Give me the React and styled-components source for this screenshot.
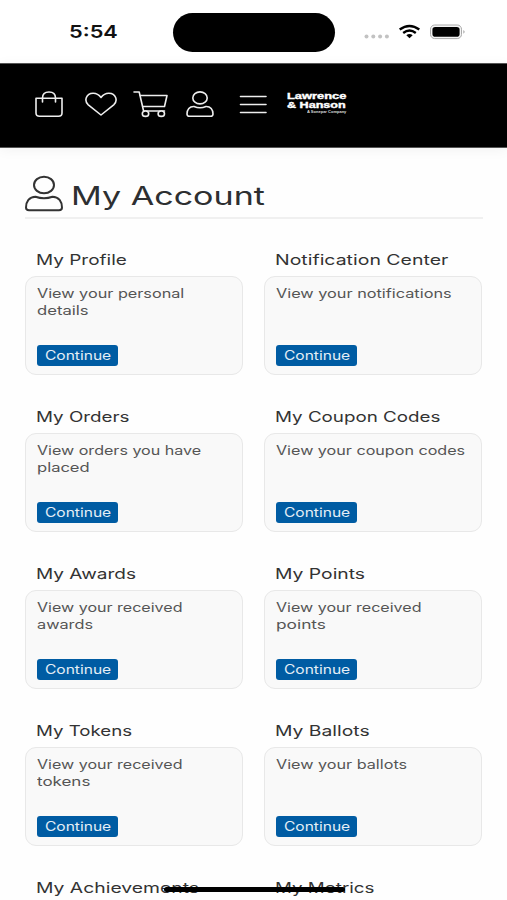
import React, { useLayoutEffect, useRef, useState } from "react";
import styled, { createGlobalStyle } from 'styled-components';


const GlobalStyle = createGlobalStyle`
    * {
        box-sizing: border-box;
    }
    body {
        margin: 0;
        background-color: white;
        font-family: Inter, "Liberation Sans", sans-serif;
        overflow: hidden;
    }
    h1, h2, p {
        margin: 0;
        font-weight: normal;
    }
`
const Screen = styled.div`
    position: relative;
    width: 507px;
    height: 900px;
    overflow: hidden;
    background-color: #fefefe;
`
const StatusBar = styled.div`
    height: 63px;
    display: flex;
    align-items: center;
    background-color: white;
`
const Clock = styled.div`
    width: 173px;
    padding-left: 68.5px;
    font-size: 17.5px;
    font-weight: 600;
    line-height: 24px;
    color: #111;
`
const Island = styled.div`
    width: 162px;
    height: 39px;
    margin-top: 1px;
    border-radius: 20px;
    background-color: black;
`
const StatusIcons = styled.svg`
    width: 104px;
    height: 20px;
    margin-left: 28px;
`
const NavBar = styled.nav`
    height: 85px;
    padding-left: 35px;
    display: flex;
    align-items: flex-start;
    background-color: black;
    border-top: 1px solid #555;
    border-bottom: 1px solid #555;
    box-shadow: 0 2px 12px rgba(0, 0, 0, 0.05);
`
const NavIcon = styled.svg`
    flex: none;
    width: ${props => props.$width}px;
    height: 28px;
    margin: 26px ${props => props.$gap}px 0 0;
    fill: none;
    stroke: #eee;
    stroke-width: 1.6;
    stroke-linecap: round;
    stroke-linejoin: round;
`
const Logo = styled.div`
    width: 60px;
    padding-top: 28px;
    font-family: "Liberation Sans", Arial, sans-serif;
    font-weight: bold;
    color: white;
`
const LogoLine = styled.div`
    height: 8.5px;
    font-size: 9.6px;
    line-height: 8.5px;
    -webkit-text-stroke: 0.4px white;
`
const LogoTag = styled.div`
    padding: 1px 0 0 20px;
    font-size: 3.5px;
    line-height: 4px;
    color: #ddd;
`
const Main = styled.main`
    padding: 26px 24.5px 0 25px;
`
const TitleRow = styled.header`
    height: 45px;
    display: flex;
    border-bottom: 2px solid #f0f0f0;
`
const TitleIcon = styled.svg`
    flex: none;
    width: 38px;
    height: 38px;
    margin-top: 1px;
    fill: none;
    stroke: #333;
    stroke-width: 2;
`
const Title = styled.h1`
    padding: 6px 0 0 8px;
    font-size: 25px;
    line-height: 32px;
    color: #2d2f31;
`
const Grid = styled.div`
    padding-top: 30px;
    display: grid;
    grid-template-columns: 218px 218px;
    column-gap: 21px;
    grid-auto-rows: 157.1px;
`
const CardTitle = styled.h2`
    height: 27px;
    padding-left: 10.5px;
    font-size: 14.6px;
    line-height: 22px;
    color: #333;
`
const CardBody = styled.div`
    height: 99px;
    padding: 9px 11px 8.5px 11px;
    display: flex;
    flex-direction: column;
    align-items: flex-start;
    justify-content: space-between;
    border: 1px solid #e8e8e8;
    border-radius: 11px;
    background-color: #f9f9f9;
`
const CardText = styled.p`
    font-size: 12.8px;
    line-height: 16.7px;
    color: #555;
`
const Button = styled.button`
    width: 81px;
    height: 21px;
    padding: 0 0 0 7.5px;
    text-align: left;
    border: none;
    border-radius: 3px;
    background-color: #005ca3;
    color: #e4eef6;
    font-family: inherit;
    font-size: 12.4px;
    line-height: 21px;
`
const HomeBar = styled.div`
    position: absolute;
    left: 164px;
    bottom: 8.5px;
    width: 181px;
    height: 5px;
    border-radius: 3px;
    background-color: black;
`
const Wide = styled.span`
    display: block;
    width: max-content;
    white-space: nowrap;
    transform-origin: left center;
`

// one line of wide type, drawn out to the given width
function Stretch(props) {
    const ref = useRef(null);
    const [scale, setScale] = useState(1);

    useLayoutEffect(() => {
        setScale(props.width / ref.current.offsetWidth);
    }, [props.width]);

    return <Wide ref={ref} style={{ transform: `scaleX(${scale})` }}>{props.children}</Wide>
}

const cards = [
    { title: ["My Profile", 91], text: [["View your personal", 147], ["details", 52]] },
    { title: ["Notification Center", 173.5], text: [["View your notifications", 175.5]] },
    { title: ["My Orders", 94], text: [["View orders you have", 164.5], ["placed", 53]] },
    { title: ["My Coupon Codes", 166], text: [["View your coupon codes", 189]] },
    { title: ["My Awards", 100.5], text: [["View your received", 145.5], ["awards", 56]] },
    { title: ["My Points", 90], text: [["View your received", 145.5], ["points", 50]] },
    { title: ["My Tokens", 96], text: [["View your received", 145.5], ["tokens", 53]] },
    { title: ["My Ballots", 94], text: [["View your ballots", 131.5]] },
    { title: ["My Achievements", 163] },
    { title: ["My Metrics", 99] },
]

function Card(props) {
    return (
        <section>
            <CardTitle><Stretch width={props.title[1]}>{props.title[0]}</Stretch></CardTitle>
            {props.text && (
                <CardBody>
                    <CardText>
                        {props.text.map(line => (
                            <Stretch key={line[0]} width={line[1]}>{line[0]}</Stretch>
                        ))}
                    </CardText>
                    <Button><Stretch width={66.5}>Continue</Stretch></Button>
                </CardBody>
            )}
        </section>
    )
}

function Status() {
    return (
        <StatusBar>
            <Clock><Stretch width={48.5}>5:54</Stretch></Clock>
            <Island />
            <StatusIcons viewBox="0 0 104 20">
                <g fill="#c2c2c2">
                    <circle cx="3.5" cy="14.5" r="2" />
                    <circle cx="10.3" cy="14.5" r="2" />
                    <circle cx="17.1" cy="14.5" r="2" />
                    <circle cx="23.9" cy="14.5" r="2" />
                </g>
                <g fill="none" stroke="black" strokeWidth="2.4">
                    <path d="M36.7 7.5Q46.5 0.4 56.3 7.5" />
                    <path d="M40.2 11Q46.5 6.2 52.8 11" />
                </g>
                <path d="M43.3 13.2Q46.5 11 49.7 13.2L46.5 16.2Z" />
                <rect x="67.5" y="3" width="31" height="13.6" rx="4.2" fill="#f4f4f4" stroke="#aaa" />
                <rect x="69.4" y="4.9" width="27.2" height="9.8" rx="2.8" />
                <path d="M100.5 8Q102.5 9.8 100.5 11.8Z" fill="#888" />
            </StatusIcons>
        </StatusBar>
    )
}

function Nav() {
    return (
        <NavBar>
            <NavIcon $width={28} $gap={22} viewBox="0 0 28 28">
                <path d="M1 8.2H27V23Q27 26.3 23.5 26.3H4.5Q1 26.3 1 23Z" />
                <path d="M7.5 12V8Q7.5 2 14 2Q20.5 2 20.5 8V12" />
            </NavIcon>
            <NavIcon $width={32} $gap={16} viewBox="0 0 32 28">
                <path d="M16 25L3.3 14.8C-1.3 10.6 1.2 3.5 8 3.3C11.8 3.2 14.3 5.2 16 7.5C17.7 5.2 20.2 3.2 24 3.3C30.8 3.5 33.3 10.6 28.7 14.8Z" />
            </NavIcon>
            <NavIcon $width={35} $gap={18} viewBox="0 0 35 28">
                <path d="M1 2H6.2L10.6 21H31.5" />
                <path d="M7.3 5.5H34L31.5 16.5H9.7" />
                <ellipse cx="12.5" cy="23.7" rx="3.2" ry="2.7" fill="black" />
                <ellipse cx="28.3" cy="23.7" rx="3.2" ry="2.7" fill="black" />
            </NavIcon>
            <NavIcon $width={28} $gap={25} viewBox="0 0 28 28">
                <ellipse cx="14" cy="7.9" rx="7.2" ry="6" />
                <path d="M8 16.5C11.5 18 16.5 18 20 16.5C24.5 16.3 27 19.5 27 24Q27 26.3 24.5 26.3H3.5Q1 26.3 1 24C1 19.5 3.5 16.3 8 16.5Z" />
            </NavIcon>
            <NavIcon $width={28} $gap={20} viewBox="0 0 28 28">
                <path d="M1.5 6.5H27M1.5 14.5H27M1.5 22.5H27" />
            </NavIcon>
            <Logo>
                <LogoLine><Stretch width={59}>Lawrence</Stretch></LogoLine>
                <LogoLine><Stretch width={59}>&amp; Hanson</Stretch></LogoLine>
                <LogoTag><Stretch width={39}>A Sonepar Company</Stretch></LogoTag>
            </Logo>
        </NavBar>
    )
}

function App() {
    return (
        <Screen>
            <GlobalStyle />
            <Status />
            <Nav />
            <Main>
                <TitleRow>
                    <TitleIcon viewBox="0 0 38 38">
                        <ellipse cx="19" cy="10" rx="10" ry="8.3" />
                        <path d="M10.5 21.7C15.5 23.5 22.5 23.5 27.5 21.7C33.8 21.7 37 26.5 37 32.5Q37 35.3 34 35.3H4Q1 35.3 1 32.5C1 26.5 4.2 21.7 10.5 21.7Z" />
                    </TitleIcon>
                    <Title><Stretch width={193.5}>My Account</Stretch></Title>
                </TitleRow>
                <Grid>
                    {cards.map(card => <Card key={card.title[0]} title={card.title} text={card.text} />)}
                </Grid>
            </Main>
            <HomeBar />
        </Screen>
    )
}

export default App;
